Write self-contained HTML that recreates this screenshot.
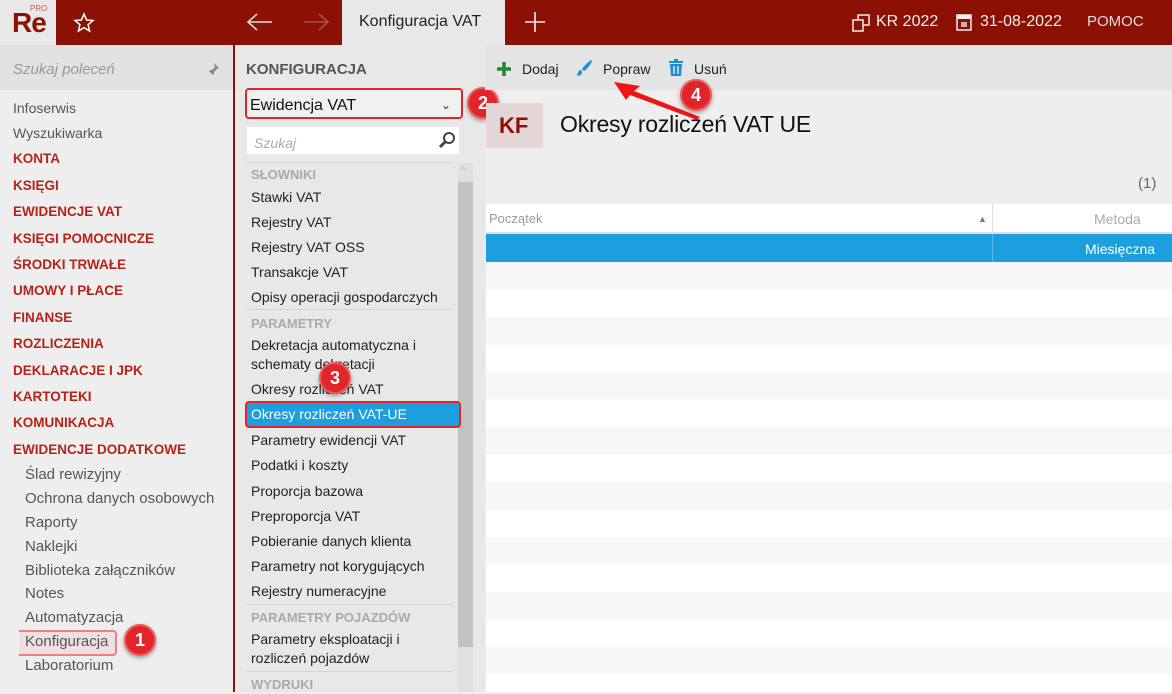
<!DOCTYPE html>
<html><head><meta charset="utf-8">
<style>
*{margin:0;padding:0;box-sizing:border-box}
body{width:1172px;height:692px;overflow:hidden;position:relative;background:#eeeeee;font-family:"Liberation Sans",sans-serif;font-size:14px;color:#222}
.a{position:absolute}
.t{position:absolute;white-space:nowrap;line-height:18px}
.r{color:#b5231a;font-weight:bold;font-size:13.5px}
.g{color:#555}
.h{color:#aaa;font-weight:bold;font-size:13px}
.badge{position:absolute;width:32px;height:32px;border-radius:50%;background:#e0262b;border:2px solid #f05a5a;color:#fff;font-weight:bold;font-size:18px;text-align:center;line-height:28px;box-shadow:0 2px 4px rgba(0,0,0,.35)}
</style></head><body>
<div class="a" style="left:0;top:0;width:1172px;height:45px;background:#8b1105"></div>
<div class="a" style="left:0;top:0;width:56px;height:45px;background:#e8e8e8"></div>
<div class="t" style="left:12px;top:9px;font-size:28px;line-height:28px;font-weight:bold;color:#8b1105;letter-spacing:-1px">Re</div>
<div class="t" style="left:30px;top:5px;font-size:8px;line-height:8px;color:#c06060">PRO</div>
<svg class="a" style="left:73px;top:12px" width="22" height="22" viewBox="0 0 22 22"><path d="M11 2l2.6 6 6.4.5-4.9 4.2 1.5 6.3L11 15.6 5.4 19l1.5-6.3L2 8.5 8.4 8z" fill="none" stroke="#fff" stroke-width="1.5"/></svg>
<svg class="a" style="left:246px;top:12px" width="28" height="20"><path d="M2 10h24M11 2l-9 8 9 8" fill="none" stroke="#ddd" stroke-width="1.6"/></svg>
<svg class="a" style="left:302px;top:12px" width="28" height="20"><path d="M2 10h24M17 2l9 8-9 8" fill="none" stroke="#b05040" stroke-width="1.6"/></svg>
<div class="a" style="left:342px;top:0;width:163px;height:45px;background:#e8e8e8"></div>
<div class="t" style="left:359px;top:13px;font-size:16px;color:#222">Konfiguracja VAT</div>
<svg class="a" style="left:524px;top:11px" width="22" height="22"><path d="M11 1v20M1 11h20" stroke="#eee" stroke-width="1.6"/></svg>
<svg class="a" style="left:852px;top:14px" width="20" height="18"><rect x="6" y="1" width="11" height="10" fill="none" stroke="#eee" stroke-width="1.5"/><rect x="1" y="6" width="10" height="11" fill="#8b1105" stroke="#eee" stroke-width="1.5"/></svg>
<div class="t" style="left:876px;top:13px;font-size:16px;color:#eee">KR 2022</div>
<svg class="a" style="left:956px;top:13px" width="16" height="18"><rect x="1" y="2" width="14" height="15" fill="none" stroke="#eee" stroke-width="1.5"/><rect x="1" y="2" width="14" height="4" fill="#eee"/><rect x="5" y="9" width="6" height="5" fill="#eee" opacity=".7"/></svg>
<div class="t" style="left:980px;top:13px;font-size:16px;color:#eee">31-08-2022</div>
<div class="t" style="left:1087px;top:13px;font-size:15px;color:#ddd">POMOC</div>
<div class="a" style="left:0;top:45px;width:233px;height:45px;background:#e2e2e2"></div>
<div class="t" style="left:13px;top:61px;font-size:15px;font-style:italic;color:#999">Szukaj poleceń</div>
<svg class="a" style="left:206px;top:62px" width="14" height="14"><path d="M8 1l5 5-2 1-3 3 0 2-1 1-2-2-4 4 4-4-2-2 1-1h2l3-3z" fill="#888"/></svg>
<div class="a" style="left:233px;top:45px;width:2px;height:647px;background:#8b1105"></div>
<div class="t g" style="left:13px;top:99px">Infoserwis</div>
<div class="t g" style="left:13px;top:124px">Wyszukiwarka</div>
<div class="t r" style="left:13px;top:150px">KONTA</div>
<div class="t r" style="left:13px;top:177px">KSIĘGI</div>
<div class="t r" style="left:13px;top:203px">EWIDENCJE VAT</div>
<div class="t r" style="left:13px;top:230px">KSIĘGI POMOCNICZE</div>
<div class="t r" style="left:13px;top:256px">ŚRODKI TRWAŁE</div>
<div class="t r" style="left:13px;top:282px">UMOWY I PŁACE</div>
<div class="t r" style="left:13px;top:309px">FINANSE</div>
<div class="t r" style="left:13px;top:335px">ROZLICZENIA</div>
<div class="t r" style="left:13px;top:362px">DEKLARACJE I JPK</div>
<div class="t r" style="left:13px;top:388px">KARTOTEKI</div>
<div class="t r" style="left:13px;top:414px">KOMUNIKACJA</div>
<div class="t r" style="left:13px;top:441px">EWIDENCJE DODATKOWE</div>
<div class="t g" style="left:25px;top:466px;font-size:15px">Ślad rewizyjny</div>
<div class="t g" style="left:25px;top:490px;font-size:15px">Ochrona danych osobowych</div>
<div class="t g" style="left:25px;top:514px;font-size:15px">Raporty</div>
<div class="t g" style="left:25px;top:538px;font-size:15px">Naklejki</div>
<div class="t g" style="left:25px;top:562px;font-size:15px">Biblioteka załączników</div>
<div class="t g" style="left:25px;top:585px;font-size:15px">Notes</div>
<div class="t g" style="left:25px;top:609px;font-size:15px">Automatyzacja</div>
<div class="a" style="left:19px;top:630px;width:98px;height:26px;border:2px solid #f08080;border-left:none;border-radius:0 4px 4px 0;background:rgba(240,150,150,.15)"></div>
<div class="t g" style="left:25px;top:633px;font-size:15px">Konfiguracja</div>
<div class="t g" style="left:25px;top:657px;font-size:15px">Laboratorium</div>
<div class="badge" style="left:124px;top:624px">1</div>
<div class="a" style="left:235px;top:45px;width:250px;height:647px;background:#e8e8e8"></div>
<div class="t" style="left:246px;top:61px;font-size:15px;font-weight:bold;color:#555">KONFIGURACJA</div>
<div class="a" style="left:245px;top:88px;width:218px;height:31px;border:2px solid #e0262b;border-radius:4px;background:#f0f0f0"></div>
<div class="t" style="left:250px;top:97px;font-size:16px;color:#111">Ewidencja VAT</div>
<div class="t" style="left:441px;top:96px;font-size:12px;color:#333">⌄</div>
<div class="badge" style="left:467px;top:87px">2</div>
<div class="a" style="left:247px;top:127px;width:212px;height:27px;background:#fff"></div>
<div class="t" style="left:254px;top:134px;font-size:14px;font-style:italic;color:#aaa">Szukaj</div>
<svg class="a" style="left:438px;top:131px" width="18" height="18"><circle cx="11" cy="7" r="5" fill="none" stroke="#444" stroke-width="2"/><path d="M7.5 10.5L2 16" stroke="#444" stroke-width="3"/></svg>
<div class="a" style="left:247px;top:162px;width:206px;height:1px;background:#d4d4d4"></div>
<div class="a" style="left:458px;top:163px;width:15px;height:529px;background:#e0e0e0"></div>
<div class="t" style="left:461px;top:163px;font-size:10px;color:#bbb">^</div>
<div class="a" style="left:458px;top:182px;width:15px;height:465px;background:#c2c2c2"></div>
<div class="t h" style="left:251px;top:166px">SŁOWNIKI</div>
<div class="t" style="left:251px;top:188px">Stawki VAT</div>
<div class="t" style="left:251px;top:213px">Rejestry VAT</div>
<div class="t" style="left:251px;top:238px">Rejestry VAT OSS</div>
<div class="t" style="left:251px;top:263px">Transakcje VAT</div>
<div class="t" style="left:251px;top:288px">Opisy operacji gospodarczych</div>
<div class="a" style="left:247px;top:309px;width:206px;height:1px;background:#d4d4d4"></div>
<div class="t h" style="left:251px;top:315px">PARAMETRY</div>
<div class="t" style="left:251px;top:336px">Dekretacja automatyczna i</div>
<div class="t" style="left:251px;top:355px">schematy dekretacji</div>
<div class="t" style="left:251px;top:380px">Okresy rozliczeń VAT</div>
<div class="badge" style="left:319px;top:362px">3</div>
<div class="a" style="left:245px;top:401px;width:216px;height:27px;background:#1d9fdf;border:2px solid #e0262b;border-radius:4px"></div>
<div class="t" style="left:251px;top:405px;color:#fff">Okresy rozliczeń VAT-UE</div>
<div class="t" style="left:251px;top:431px">Parametry ewidencji VAT</div>
<div class="t" style="left:251px;top:456px">Podatki i koszty</div>
<div class="t" style="left:251px;top:482px">Proporcja bazowa</div>
<div class="t" style="left:251px;top:507px">Preproporcja VAT</div>
<div class="t" style="left:251px;top:532px">Pobieranie danych klienta</div>
<div class="t" style="left:251px;top:557px">Parametry not korygujących</div>
<div class="t" style="left:251px;top:582px">Rejestry numeracyjne</div>
<div class="a" style="left:247px;top:604px;width:206px;height:1px;background:#d4d4d4"></div>
<div class="t h" style="left:251px;top:609px">PARAMETRY POJAZDÓW</div>
<div class="t" style="left:251px;top:630px">Parametry eksploatacji i</div>
<div class="t" style="left:251px;top:649px">rozliczeń pojazdów</div>
<div class="a" style="left:247px;top:671px;width:206px;height:1px;background:#d4d4d4"></div>
<div class="t h" style="left:251px;top:676px">WYDRUKI</div>
<div class="a" style="left:485px;top:45px;width:687px;height:45px;background:#e4e4e4"></div>
<svg class="a" style="left:496px;top:61px" width="16" height="16"><path d="M8 1v14M1 8h14" stroke="#1e8a2a" stroke-width="3.5"/></svg>
<div class="t" style="left:522px;top:60px;font-size:14px">Dodaj</div>
<svg class="a" style="left:575px;top:59px" width="18" height="18"><path d="M16 1C12 4 9 7 7 10l2 2c3-2 6-5 8-10z" fill="#1d8fd0"/><path d="M6 11c-2 0-3 2-3 3s-1 2-2 2c2 1 6 1 6-3z" fill="#1d8fd0"/></svg>
<div class="t" style="left:603px;top:60px;font-size:14px">Popraw</div>
<svg class="a" style="left:668px;top:59px" width="16" height="18"><rect x="1" y="2" width="14" height="2" fill="#1d8fd0"/><rect x="6" y="0" width="4" height="2" fill="#1d8fd0"/><path d="M2 5h12l-1 12H3z" fill="#1d8fd0"/><path d="M6 7v8M10 7v8" stroke="#e4e4e4" stroke-width="1.5"/></svg>
<div class="t" style="left:694px;top:60px;font-size:14px">Usuń</div>
<div class="a" style="left:486px;top:103px;width:57px;height:45px;background:#e4d6d6"></div>
<div class="t" style="left:499px;top:115px;font-size:22px;line-height:22px;font-weight:bold;color:#8b1105">KF</div>
<div class="t" style="left:560px;top:112px;font-size:23px;line-height:24px;color:#111;letter-spacing:-0.2px">Okresy rozliczeń VAT UE</div>
<div class="t" style="left:1138px;top:175px;font-size:15px;color:#666">(1)</div>
<div class="a" style="left:486px;top:204px;width:686px;height:29px;background:#fff"></div>
<div class="a" style="left:486px;top:232px;width:686px;height:2px;background:#e0e0e0"></div>
<div class="t" style="left:489px;top:210px;font-size:13px;color:#999">Początek</div>
<div class="t" style="left:978px;top:210px;font-size:9px;color:#777">▲</div>
<div class="a" style="left:992px;top:204px;width:1px;height:58px;background:#ddd"></div>
<div class="t" style="left:1094px;top:210px;font-size:14px;color:#aaa">Metoda</div>
<div class="a" style="left:486px;top:234px;width:686px;height:28px;background:#1d9fdf"></div>
<div class="a" style="left:992px;top:234px;width:1px;height:28px;background:#5bb8e8"></div>
<div class="t" style="left:1085px;top:240px;font-size:14px;color:#fff">Miesięczna</div>
<div class="a" style="left:486px;top:262px;width:686px;height:430px;background:repeating-linear-gradient(#f7f7f7 0,#f7f7f7 27.5px,#fff 27.5px,#fff 55px)"></div>
<svg class="a" style="left:600px;top:70px" width="120" height="50"><path d="M14 12L40 16 34 21 100 47 97 50 30 25 26 30z" fill="#f01515"/></svg>
<div class="badge" style="left:680px;top:79px">4</div>
</body></html>
